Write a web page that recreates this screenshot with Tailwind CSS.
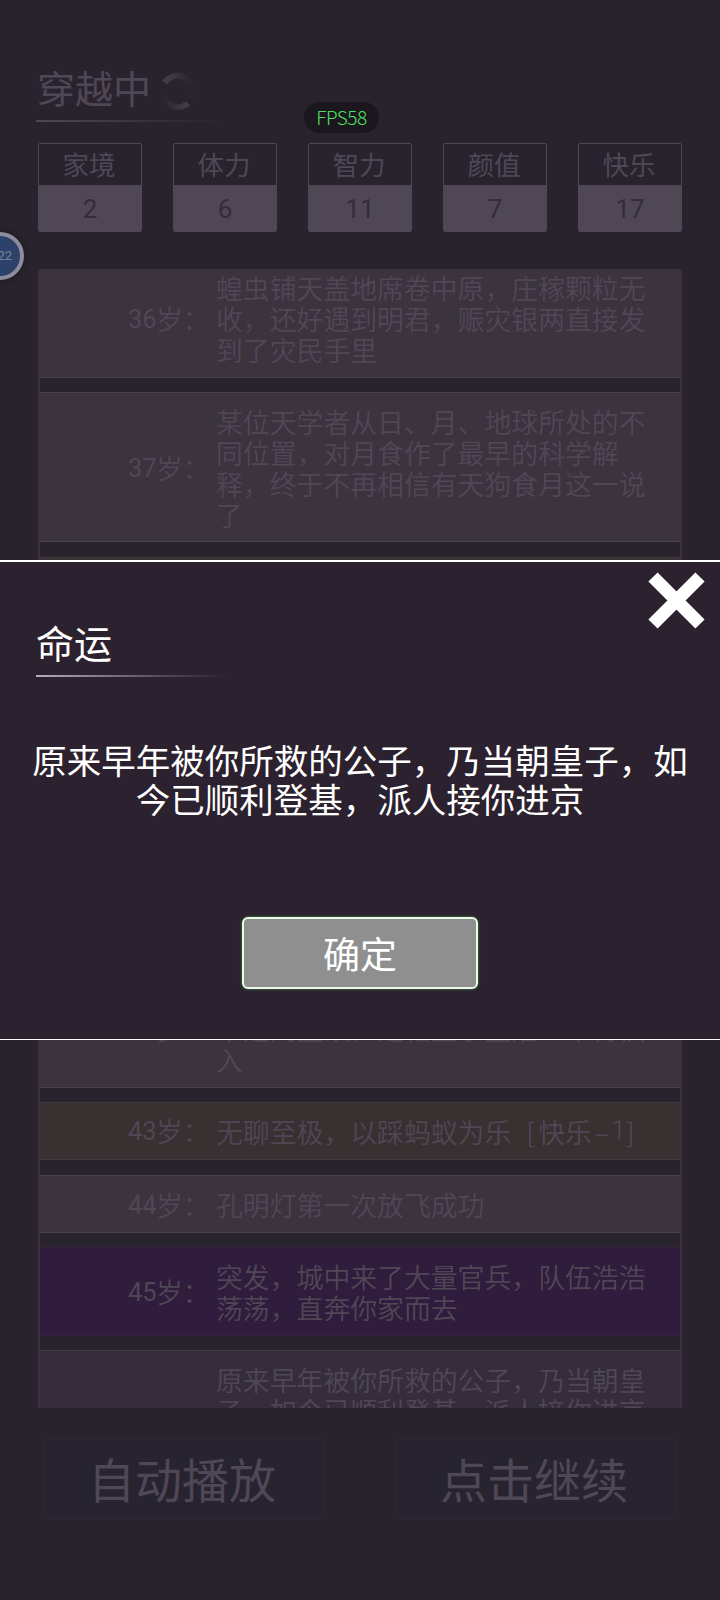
<!DOCTYPE html>
<html lang="zh-CN">
<head>
<meta charset="utf-8">
<title>命运</title>
<script src="https://cdn.jsdelivr.net/npm/@tailwindcss/browser@4"></script>
</head>
<body class="bg-[#29232e]">
<div class="relative w-[720px] h-[1600px] overflow-hidden bg-[#29232e] text-[#504756] font-['Noto_Sans_CJK_SC',sans-serif]">
  <main class="flex h-full flex-col px-[38px] pt-[62px]">
    <header class="flex h-[58px] shrink-0 items-start">
      <h1 class="-ml-px w-[114px] text-[38px] leading-[50px] font-normal whitespace-nowrap">穿越中</h1>
      <svg class="ml-[7px] mt-[9px]" width="40" height="42" viewBox="0 0 40 42" fill="none" stroke-width="6">
        <defs>
          <linearGradient id="g" x1="0" y1="0" x2="1" y2="0"><stop stop-color="#463d4b"/><stop offset="1" stop-color="#29232e"/></linearGradient>
          <linearGradient id="h" x1="0" y1="0" x2="1" y2="0"><stop stop-color="#29232e"/><stop offset="1" stop-color="#463d4b"/></linearGradient>
        </defs>
        <path d="M6.700 11.500A16 16 0 0 1 34 28" stroke="url(#g)"/>
        <path d="M4 20A16 16 0 0 0 30 32.500" stroke="url(#h)"/>
      </svg>
    </header>
    <div class="-ml-0.5 h-0.5 w-[190px] shrink-0 bg-linear-to-r from-[#504756] to-[#29232e]"></div>
    <section class="mt-[21px] flex shrink-0 justify-between text-center text-[26.5px] leading-[39px] font-normal">
      <div class="h-[89px] w-[104px] rounded-xs border border-[#504756]"><div class="h-[41px] pr-0.5">家境</div><div class="h-[46px] bg-[#4f4854] text-[26px] leading-[49px] text-[#352b3b] font-[Roboto,sans-serif]">2</div></div>
      <div class="h-[89px] w-[104px] rounded-xs border border-[#504756]"><div class="h-[41px] pr-0.5">体力</div><div class="h-[46px] bg-[#4f4854] text-[26px] leading-[49px] text-[#352b3b] font-[Roboto,sans-serif]">6</div></div>
      <div class="h-[89px] w-[104px] rounded-xs border border-[#504756]"><div class="h-[41px] pr-0.5">智力</div><div class="h-[46px] bg-[#4f4854] text-[26px] leading-[49px] text-[#352b3b] font-[Roboto,sans-serif]">11</div></div>
      <div class="h-[89px] w-[104px] rounded-xs border border-[#504756]"><div class="h-[41px] pr-0.5">颜值</div><div class="h-[46px] bg-[#4f4854] text-[26px] leading-[49px] text-[#352b3b] font-[Roboto,sans-serif]">7</div></div>
      <div class="h-[89px] w-[104px] rounded-xs border border-[#504756]"><div class="h-[41px] pr-0.5">快乐</div><div class="h-[46px] bg-[#4f4854] text-[26px] leading-[49px] text-[#352b3b] font-[Roboto,sans-serif]">17</div></div>
    </section>

    <section class="mt-[37px] flex h-[1139px] shrink-0 flex-col justify-between overflow-hidden rounded-t-xs border-x-2 border-[#3e303f] text-[26.85px] leading-[31px] font-[350] whitespace-nowrap">
      <div class="flex h-[291px] flex-col gap-[14px] overflow-hidden">
        <div class="-mt-[10px] flex h-[119px] shrink-0 items-center border-y border-[#4a414f] bg-[#3b333e]"><div class="flex w-[176px] shrink-0 pl-[88px]"><span class="w-[28px] pt-px text-[25.5px] font-normal font-[Roboto,sans-serif]">36</span>岁：</div><div>蝗虫铺天盖地席卷中原，庄稼颗粒无<br>收，还好遇到明君，赈灾银两直接发<br>到了灾民手里</div></div>
        <div class="flex h-[150px] shrink-0 items-center border-y border-[#4a414f] bg-[#3b333e] pt-0.5"><div class="flex w-[176px] shrink-0 pl-[88px]"><span class="w-[28px] pt-px text-[25.5px] font-normal font-[Roboto,sans-serif]">37</span>岁：</div><div>某位天学者从日、月、地球所处的不<br>同位置，对月食作了最早的科学解<br>释，终于不再相信有天狗食月这一说<br>了</div></div>
        <div class="mt-px h-[57px] shrink-0 border-y border-[#403840] bg-[#383031]"></div>
      </div>
      <div class="flex h-[439px] shrink-0 flex-col overflow-hidden">
        <div class="flex h-[119px] shrink-0 items-center border-y border-[#4a414f] bg-[#3b333e]"><div class="flex w-[176px] shrink-0 pl-[88px]"><span class="w-[28px] pt-px text-[25.5px] font-normal font-[Roboto,sans-serif]">42</span>岁：</div><div><br>不是闹些故，是相量学生活一不得供<br>入</div></div>
        <div class="mt-[14px] flex h-[58px] shrink-0 items-center border-y border-[#403840] bg-[#383031]"><div class="flex w-[176px] shrink-0 pl-[88px]"><span class="w-[28px] pt-px text-[25.5px] font-normal font-[Roboto,sans-serif]">43</span>岁：</div><div class="flex"><span>无聊至极，以踩蚂蚁为乐</span><span class="ml-[15px]">[</span><span class="ml-[3px]">快乐</span><span class="w-[19px] text-center">–</span><span class="font-[Roboto,sans-serif]">1</span><span>]</span></div></div>
        <div class="mt-[15px] flex h-[58px] shrink-0 items-center border-y border-[#4a414f] bg-[#3b333e] pt-px"><div class="flex w-[176px] shrink-0 pl-[88px]"><span class="w-[28px] pt-px text-[25.5px] font-normal font-[Roboto,sans-serif]">44</span>岁：</div><div>孔明灯第一次放飞成功</div></div>
        <div class="mt-[14px] flex h-[89px] shrink-0 items-center border-y border-[#35213f] bg-[#301c3d]"><div class="flex w-[176px] shrink-0 pl-[88px]"><span class="w-[28px] pt-px text-[25.5px] font-normal font-[Roboto,sans-serif]">45</span>岁：</div><div>突发，城中来了大量官兵，队伍浩浩<br>荡荡，直奔你家而去</div></div>
        <div class="mt-[14px] h-[119px] shrink-0 border-y border-[#463d4c] bg-[#352d3b] pt-[13px] pl-[176px]">原来早年被你所救的公子，乃当朝皇<br>子，如今已顺利登基，派人接你进京</div>
      </div>
    </section>

    <footer class="mt-[30px] flex shrink-0 justify-between pr-[6px] pl-[4px] text-center text-[47px] leading-[76px] font-normal">
      <div class="h-[82px] w-[282px] rounded border-2 border-[#2c2632] bg-[#27232f] pr-0.5">自动播放</div>
      <div class="h-[82px] w-[282px] rounded border-2 border-[#2c2632] bg-[#27232f] pr-0.5">点击继续</div>
    </footer>
  </main>

  <div class="absolute top-[102px] left-[304px] h-[31px] w-[75px] rounded-full bg-[#1b171e] text-center text-[19px] leading-[30px] tracking-[-0.5px] font-light text-[#50e060]">FPS58</div>

  <div class="absolute top-[232px] left-[-24px] flex h-[48px] w-[48px] items-center justify-end rounded-full border-4 border-[#8f8d9d] bg-[#2c426b] pr-[8px] text-[13px] text-[#7d8294] shadow-[0_0_5px_#1b171e] font-[Roboto,sans-serif]">22</div>

  <section class="absolute inset-x-0 top-[560px] flex h-[480px] flex-col border-t-2 border-b border-white bg-[#2c212e] text-white">
    <svg class="absolute top-[10px] right-[15px]" width="57" height="57" viewBox="0 0 57 57" stroke="#fff" stroke-width="13"><path d="M5 5L52 52M52 5L5 52"/></svg>
    <h2 class="mt-[55px] ml-[36px] text-[38px] leading-[50px] font-normal">命运</h2>
    <div class="mt-[8px] ml-[36px] h-0.5 w-[190px] bg-linear-to-r from-[#b5aeb8] to-[#2c212e]"></div>
    <p class="mt-[63px] text-center text-[34.5px] leading-[38.500px] font-normal whitespace-nowrap">原来早年被你所救的公子，乃当朝皇子，如<br>今已顺利登基，派人接你进京</p>
    <button class="mx-auto mt-[100px] h-[72px] w-[236px] rounded-md border-2 border-[#eafbea] bg-[#8f8f8f] text-[37px] leading-[68px] shadow-[0_0_3px_#3f8a45]">确定</button>
  </section>
</div>
</body>
</html>
